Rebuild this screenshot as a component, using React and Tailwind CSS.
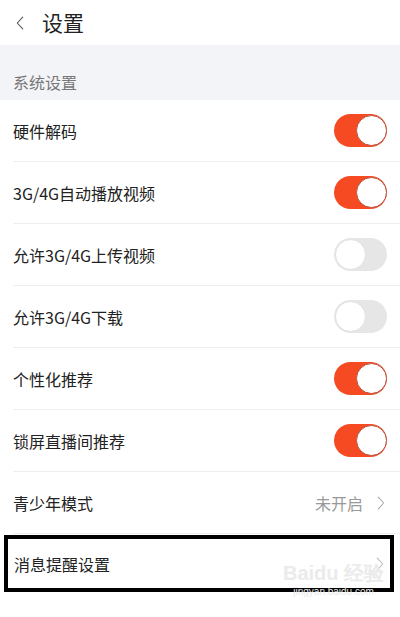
import React from "react";

const rows = [
  { label: "硬件解码", type: "toggle", on: true },
  { label: "3G/4G自动播放视频", type: "toggle", on: true },
  { label: "允许3G/4G上传视频", type: "toggle", on: false },
  { label: "允许3G/4G下载", type: "toggle", on: false },
  { label: "个性化推荐", type: "toggle", on: true },
  { label: "锁屏直播间推荐", type: "toggle", on: true },
  { label: "青少年模式", type: "link", value: "未开启" },
];

const Chevron = ({ className }) => (
  <svg className={className} viewBox="0 0 10 18" fill="none" stroke="currentColor" strokeWidth="1.4">
    <path d="M1.5 1.5 8.5 9 1.5 16.5" strokeLinecap="round" strokeLinejoin="round" />
  </svg>
);

const Toggle = ({ on }) =>
  on ? (
    <div className="flex h-[33px] w-[53px] items-center justify-end rounded-full bg-[#f54a22]">
      <div className="h-[31px] w-[31px] rounded-full border border-[#b8533d] bg-white" />
    </div>
  ) : (
    <div className="flex h-[33px] w-[53px] items-center justify-start rounded-full bg-[#e6e6e6]">
      <div className="ml-px h-[31px] w-[31px] rounded-full border border-[#e2e2e2] bg-white" />
    </div>
  );

export default function App() {
  return (
    <div
      className="relative h-[617px] w-[400px] overflow-hidden bg-white text-[#222]"
      style={{ fontFamily: '"Noto Sans CJK SC", "Noto Sans", sans-serif' }}
    >
      {/* Header */}
      <div className="flex h-[45px] items-center pl-[16px]">
        <Chevron className="h-[14px] w-[8px] rotate-180 text-[#555]" />
        <span className="ml-[18px] text-[21px] leading-none">设置</span>
      </div>

      {/* Section label */}
      <div className="flex h-[55px] items-end bg-[#f3f4f7] pb-[10px] pl-[13px]">
        <span className="text-[16px] leading-none text-[#777]">系统设置</span>
      </div>

      {/* Rows */}
      {rows.map((row) => (
        <div key={row.label} className="flex h-[62px] items-center border-b border-[#eeeeee] ml-[13px] pr-[13px]">
          <span className="flex-1 text-[16px] leading-none">{row.label}</span>
          {row.type === "toggle" ? (
            <Toggle on={row.on} />
          ) : (
            <div className="flex items-center">
              <span className="text-[16px] leading-none text-[#999]">{row.value}</span>
              <Chevron className="ml-[14px] mr-[2px] h-[14px] w-[8px] text-[#aaa]" />
            </div>
          )}
        </div>
      ))}

      {/* Highlighted row */}
      <div className="ml-[4px] mt-px flex h-[57px] w-[390px] items-center border-[4px] border-black pl-[6px] pr-[6px]">
        <span className="flex-1 text-[16px] leading-none">消息提醒设置</span>
        <Chevron className="h-[14px] w-[8px] text-[#bbb]" />
      </div>

      {/* Watermark */}
      <div className="absolute left-[283px] top-[563px] flex flex-col items-center leading-none text-[#ebebeb]">
        <span className="text-[20px] font-bold" style={{ fontFamily: '"Liberation Sans", sans-serif' }}>
          Baidu 经验
        </span>
        <span className="mt-[4px] text-[10px]" style={{ fontFamily: '"Liberation Sans", sans-serif' }}>
          jingyan.baidu.com
        </span>
      </div>
    </div>
  );
}
